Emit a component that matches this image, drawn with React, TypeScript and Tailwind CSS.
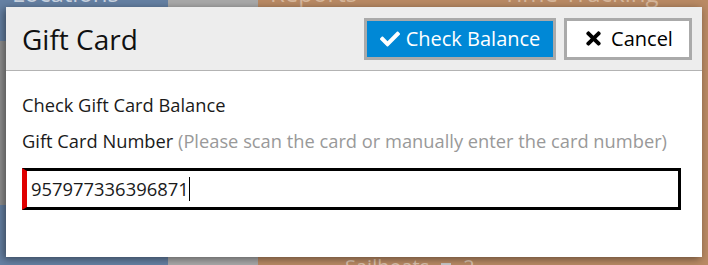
import { FaCheck, FaTimes } from "react-icons/fa";

const font = { fontFamily: '"Open Sans", "Noto Sans", sans-serif' };

export default function App() {
  return (
    <div className="relative w-[708px] h-[265px] overflow-hidden bg-[#8f8f8f]" style={font}>
      {/* background tiles behind the modal */}
      <div className="flex h-full">
        <div className="w-[168px] flex flex-col">
          <div className="h-[60px] bg-[#6580a3] text-[#c9d3e0] text-2xl leading-none -mt-[19px] pl-3">Locations</div>
          <div className="h-[60px] bg-[#6580a3] mt-auto" />
        </div>
        <div className="w-[90px] bg-[#a9a9a9]" />
        <div className="flex-1 flex flex-col bg-[#b98a64]">
          <div className="flex text-2xl leading-none -mt-[19px] text-[#d8b89d]">
            <span className="pl-3 w-[245px]">Reports</span>
            <span>Time Tracking</span>
          </div>
          <div className="mt-auto flex items-end gap-3 pl-[87px] text-xl leading-none -mb-[12px] text-[#dcc3ae]">
            <span>Sailboats</span>
            <span className="w-[10px] h-[14px] bg-[#c8c8c8]" />
            <span>2</span>
          </div>
        </div>
      </div>

      {/* modal */}
      <div className="absolute left-[6px] top-[7px] w-[696px] h-[250px] bg-white shadow-[-2px_2px_8px_rgba(0,0,0,0.45)] flex flex-col">
        <div className="h-[64px] bg-[#ededed] border-b border-[#b3b3b3] flex items-center pl-4 pr-[10px]">
          <h1 className="text-[28px] text-[#111] flex-1">Gift Card</h1>
          <button className="h-[42px] w-[192px] border-[3px] border-[#aaaaaa] bg-[#0088d6] text-white text-[20px] flex items-center justify-center gap-[6px]">
            <FaCheck className="w-[20px] h-[20px]" />
            <span>Check Balance</span>
          </button>
          <button className="ml-2 h-[42px] w-[128px] border-[3px] border-[#aaaaaa] bg-white text-black text-[20px] flex items-center justify-center gap-[7px]">
            <FaTimes className="w-[21px] h-[21px]" />
            <span>Cancel</span>
          </button>
        </div>
        <div className="px-4 pt-[22px] text-[18.3px] text-[#1a1a1a]">
          <p className="leading-6">Check Gift Card Balance</p>
          <p className="leading-6 mt-3">
            Gift Card Number <span className="text-[#999]">(Please scan the card or manually enter the card number)</span>
          </p>
          <div className="mt-[15px] h-[42px] w-[659px] border-[3px] border-black border-l-[5px] border-l-[#e00000] flex items-center pl-[4px] text-[18.4px]">
            <span>957977336396871</span>
            <span className="w-px h-[24px] bg-black" />
          </div>
        </div>
      </div>
    </div>
  );
}
